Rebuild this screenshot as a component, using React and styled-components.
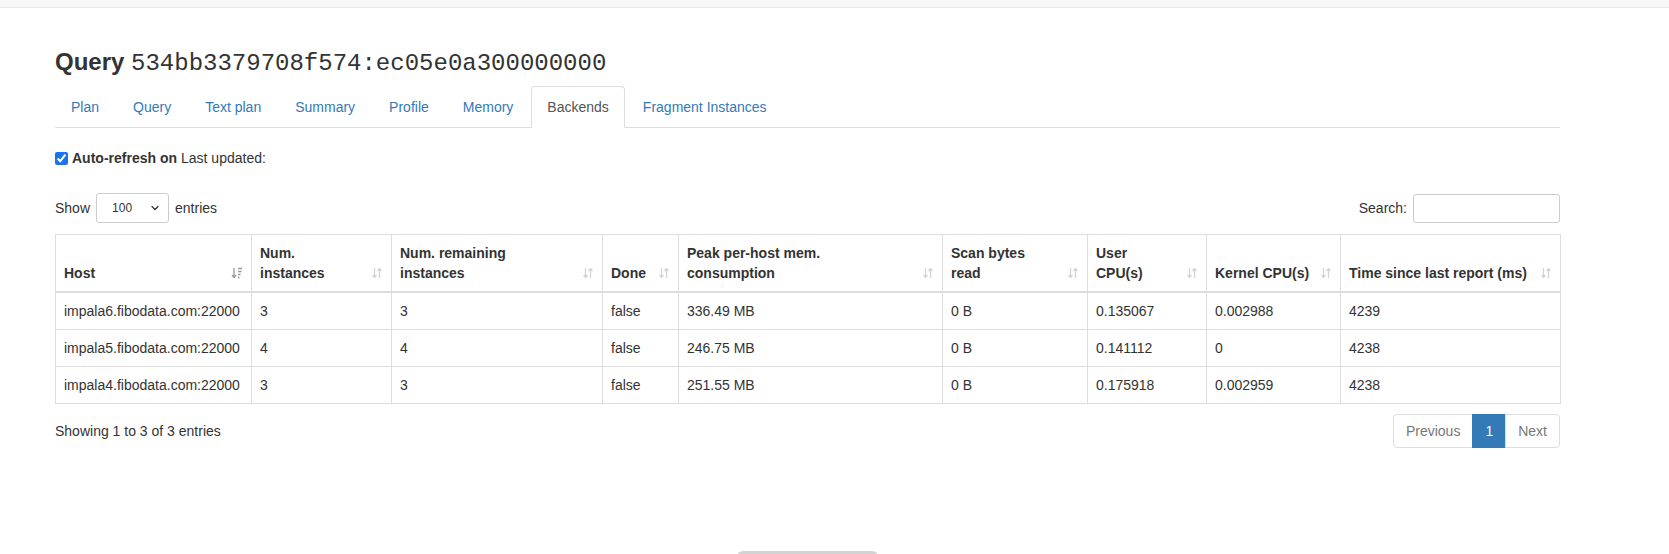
import React from 'react'
import styled, { createGlobalStyle } from 'styled-components'
import { ChevronDown } from 'lucide-react'

const GlobalStyle = createGlobalStyle`
  html, body {
    margin: 0;
    padding: 0;
    background: #fff;
  }
  body {
    font-family: "Liberation Sans", Arial, sans-serif;
    font-size: 14px;
    line-height: 20px;
    color: #333;
  }
  * { box-sizing: border-box; }
`

const TopBar = styled.div`
  height: 8px;
  background: #f8f8f8;
  border-bottom: 1px solid #e7e7e7;
`

const Page = styled.div`
  margin-left: 55px;
  width: 1505px;
`

const Heading = styled.h3`
  margin: 41px 0 0;
  font-size: 24px;
  line-height: 26px;
  font-weight: 700;
  color: #333;
  code {
    font-family: "Liberation Mono", "Courier New", monospace;
    font-weight: 400;
    font-size: 24px;
  }
`

const Tabs = styled.ul`
  display: flex;
  list-style: none;
  margin: 9px 0 0;
  padding: 0;
  border-bottom: 1px solid #ddd;
`

const Tab = styled.li`
  margin-right: 2px;
  margin-bottom: -1px;
  a {
    display: block;
    padding: 10px 15px;
    line-height: 20px;
    text-decoration: none;
    border: 1px solid ${({ $active }) => ($active ? '#ddd' : 'transparent')};
    border-bottom-color: ${({ $active }) => ($active ? '#fff' : 'transparent')};
    border-radius: 4px 4px 0 0;
    background: ${({ $active }) => ($active ? '#fff' : 'transparent')};
    color: ${({ $active }) => ($active ? '#555' : '#337ab7')};
  }
`

const AutoRefresh = styled.label`
  display: flex;
  align-items: center;
  margin-top: 20px;
  line-height: 20px;
  input {
    width: 13px;
    height: 13px;
    margin: 0 4px 0 0;
    accent-color: #1a73e8;
  }
  b { margin-right: 4px; }
`

const Controls = styled.div`
  display: flex;
  justify-content: space-between;
  align-items: center;
  margin-top: 25px;
  height: 30px;
`

const Inline = styled.label`
  display: flex;
  align-items: center;
  gap: 6px;
`

const SelectWrap = styled.span`
  position: relative;
  display: inline-flex;
  svg {
    position: absolute;
    right: 8px;
    top: 9px;
    pointer-events: none;
    color: #333;
  }
`

const Select = styled.select`
  appearance: none;
  width: 73px;
  height: 30px;
  padding: 0 0 0 15px;
  font-family: "Liberation Sans", Arial, sans-serif;
  font-size: 12px;
  color: #333;
  background: #fff;
  border: 1px solid #ccc;
  border-radius: 3px;
`

const SearchInput = styled.input`
  width: 147px;
  height: 29px;
  border: 1px solid #ccc;
  border-radius: 3px;
  font-size: 12px;
`

const Table = styled.table`
  margin-top: 11px;
  width: 1505px;
  table-layout: fixed;
  border-collapse: collapse;
  border: 1px solid #ddd;
`

const Th = styled.th`
  border: 1px solid #ddd;
  border-bottom: 2px solid #ddd;
  padding: 8px;
  vertical-align: bottom;
  text-align: left;
  font-weight: 700;
  line-height: 20px;
`

const HeadInner = styled.div`
  display: flex;
  justify-content: space-between;
  align-items: flex-end;
  gap: 6px;
  span { white-space: nowrap; }
  svg {
    flex: none;
    margin-bottom: 4px;
    color: ${({ $sorted }) => ($sorted ? '#999' : '#d4d4d4')};
  }
`

const Td = styled.td`
  border: 1px solid #ddd;
  padding: 8px;
  line-height: 20px;
  white-space: nowrap;
  overflow: hidden;
`

const Footer = styled.div`
  display: flex;
  justify-content: space-between;
  align-items: flex-start;
  margin-top: 10px;
`

const Info = styled.div`
  padding-top: 7px;
`

const Pager = styled.ul`
  display: flex;
  list-style: none;
  margin: 0;
  padding: 0;
`

const PageItem = styled.li`
  a {
    display: block;
    padding: 6px 12px;
    line-height: 20px;
    border: 1px solid ${({ $active }) => ($active ? '#337ab7' : '#ddd')};
    margin-left: -1px;
    background: ${({ $active }) => ($active ? '#337ab7' : '#fff')};
    color: ${({ $active }) => ($active ? '#fff' : '#777')};
    text-decoration: none;
  }
  &:first-child a { margin-left: 0; border-radius: 4px 0 0 4px; }
  &:last-child a { border-radius: 0 4px 4px 0; }
`

const BottomHandle = styled.div`
  width: 141px;
  height: 12px;
  margin: 103px auto 0;
  background: #d2d2d2;
  border-radius: 6px;
`

const SortBoth = () => (
  <svg width="12" height="12" viewBox="0 0 12 12" fill="none" stroke="currentColor" strokeWidth="1.3">
    <path d="M3.5 1v9.5M1.5 8l2 2.5 2-2.5" />
    <path d="M8.5 11V1.5M6.5 4l2-2.5 2 2.5" />
  </svg>
)

const SortAsc = () => (
  <svg width="12" height="12" viewBox="0 0 12 12" fill="none" stroke="currentColor" strokeWidth="1.3">
    <path d="M3 1v9.5M1 8l2 2.5 2-2.5" />
    <path d="M7 1.5h4M7 4.5h3.5M7 7.5h2.5M7 10.5h1.5" />
  </svg>
)

const tabs = ['Plan', 'Query', 'Text plan', 'Summary', 'Profile', 'Memory', 'Backends', 'Fragment Instances']

const columns = [
  { w: 196, label: ['Host'], sorted: true },
  { w: 140, label: ['Num.', 'instances'] },
  { w: 211, label: ['Num. remaining', 'instances'] },
  { w: 76, label: ['Done'] },
  { w: 264, label: ['Peak per-host mem.', 'consumption'] },
  { w: 145, label: ['Scan bytes', 'read'] },
  { w: 119, label: ['User', 'CPU(s)'] },
  { w: 134, label: ['Kernel CPU(s)'] },
  { w: 220, label: ['Time since last report (ms)'] },
]

const rows = [
  ['impala6.fibodata.com:22000', '3', '3', 'false', '336.49 MB', '0 B', '0.135067', '0.002988', '4239'],
  ['impala5.fibodata.com:22000', '4', '4', 'false', '246.75 MB', '0 B', '0.141112', '0', '4238'],
  ['impala4.fibodata.com:22000', '3', '3', 'false', '251.55 MB', '0 B', '0.175918', '0.002959', '4238'],
]

export default function App() {
  return (
    <>
      <GlobalStyle />
      <TopBar />
      <Page>
        <Heading>
          Query <code>534bb3379708f574:ec05e0a300000000</code>
        </Heading>
        <Tabs>
          {tabs.map((t) => (
            <Tab key={t} $active={t === 'Backends'}>
              <a href="#">{t}</a>
            </Tab>
          ))}
        </Tabs>
        <AutoRefresh>
          <input type="checkbox" defaultChecked />
          <b>Auto-refresh on</b> Last updated:
        </AutoRefresh>
        <Controls>
          <Inline>
            Show
            <SelectWrap>
              <Select defaultValue="100">
                <option value="10">10</option>
                <option value="25">25</option>
                <option value="50">50</option>
                <option value="100">100</option>
              </Select>
              <ChevronDown size={12} strokeWidth={2.5} />
            </SelectWrap>
            entries
          </Inline>
          <Inline>
            Search:
            <SearchInput type="search" />
          </Inline>
        </Controls>
        <Table>
          <colgroup>
            {columns.map((c, i) => (
              <col key={i} style={{ width: c.w }} />
            ))}
          </colgroup>
          <thead>
            <tr>
              {columns.map((c, i) => (
                <Th key={i}>
                  <HeadInner $sorted={c.sorted}>
                    <span>
                      {c.label.map((l, j) => (
                        <React.Fragment key={j}>
                          {j > 0 && <br />}
                          {l}
                        </React.Fragment>
                      ))}
                    </span>
                    {c.sorted ? <SortAsc /> : <SortBoth />}
                  </HeadInner>
                </Th>
              ))}
            </tr>
          </thead>
          <tbody>
            {rows.map((r, i) => (
              <tr key={i}>
                {r.map((v, j) => (
                  <Td key={j}>{v}</Td>
                ))}
              </tr>
            ))}
          </tbody>
        </Table>
        <Footer>
          <Info>Showing 1 to 3 of 3 entries</Info>
          <Pager>
            <PageItem><a href="#">Previous</a></PageItem>
            <PageItem $active><a href="#">1</a></PageItem>
            <PageItem><a href="#">Next</a></PageItem>
          </Pager>
        </Footer>
        <BottomHandle />
      </Page>
    </>
  )
}
